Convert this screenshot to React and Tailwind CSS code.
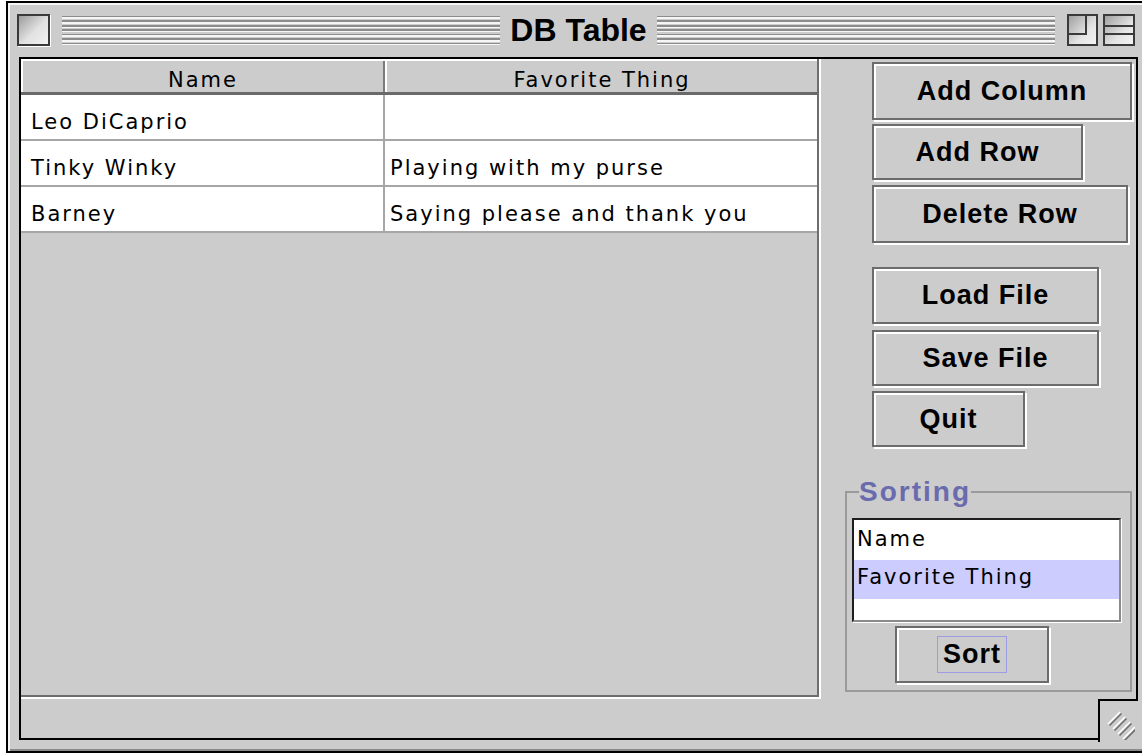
import React from 'react';

const rows = [
  { name: 'Leo DiCaprio', thing: '' },
  { name: 'Tinky Winky', thing: 'Playing with my purse' },
  { name: 'Barney', thing: 'Saying please and thank you' },
];

const plain = "font-['DejaVu_Sans',sans-serif] text-[21px] tracking-[2px] text-black whitespace-nowrap";
const bold = "font-['Liberation_Sans',sans-serif] font-bold text-[27px] tracking-[1px] text-black whitespace-nowrap";

// Title bar pinstripes
const Stripes = ({ className }) => (
  <div
    className={`h-[29px] bg-[repeating-linear-gradient(to_bottom,#8c8c8c_0px,#8c8c8c_1.5px,#f6f6f6_1.5px,#f6f6f6_3px,#cccccc_3px,#cccccc_4.5px)] ${className}`}
  />
);

const CloseBox = () => (
  <div className="w-[33px] h-[32px] border-2 border-[#3a3a3a] bg-[linear-gradient(135deg,#9c9c9c,#e2e2e2_55%,#f2f2f2)] shadow-[1px_1px_0_#ffffff]" />
);

const ZoomBox = ({ className }) => (
  <svg className={className} width="31" height="32" viewBox="0 0 31 32">
    <defs>
      <linearGradient id="zoomFill" x1="0" y1="0" x2="1" y2="1">
        <stop offset="0" stopColor="#9c9c9c" />
        <stop offset="0.6" stopColor="#e4e4e4" />
        <stop offset="1" stopColor="#f4f4f4" />
      </linearGradient>
    </defs>
    <rect x="1" y="1" width="29" height="30" fill="url(#zoomFill)" stroke="#3a3a3a" strokeWidth="2" />
    <path d="M2 20 H19 V2" fill="none" stroke="#3a3a3a" strokeWidth="2" />
  </svg>
);

const CollapseBox = ({ className }) => (
  <svg className={className} width="32" height="32" viewBox="0 0 32 32">
    <defs>
      <linearGradient id="collapseFill" x1="0" y1="0" x2="1" y2="1">
        <stop offset="0" stopColor="#9c9c9c" />
        <stop offset="0.6" stopColor="#e4e4e4" />
        <stop offset="1" stopColor="#f4f4f4" />
      </linearGradient>
    </defs>
    <rect x="1" y="1" width="30" height="30" fill="url(#collapseFill)" stroke="#3a3a3a" strokeWidth="2" />
    <path d="M2 12 H30 M2 20 H30" fill="none" stroke="#3a3a3a" strokeWidth="2" />
  </svg>
);

const MacButton = ({ className, children }) => (
  <div
    className={`flex items-center justify-center border-2 border-[#6c6c6c] bg-[#cccccc] shadow-[inset_2px_2px_0_#ffffff,2px_2px_0_#ffffff] ${bold} ${className}`}
  >
    {children}
  </div>
);

const Table = () => (
  <div className="w-[800px] h-[640px] border-r-2 border-b-2 border-white">
    <div className="h-full flex flex-col border-r-2 border-b-2 border-[#6e6e6e]">
      <div className="flex h-[36px] bg-[#cccccc] border-t-2 border-t-white border-b-[3px] border-b-[#6a6a6a]">
        <div className={`w-[364px] flex justify-center items-center pt-[9px] border-l-2 border-l-white border-r-2 border-r-[#7a7a7a] ${plain}`}>
          Name
        </div>
        <div className={`flex-1 flex justify-center items-center pt-[9px] border-l-2 border-l-white ${plain}`}>
          Favorite Thing
        </div>
      </div>
      {rows.map((row) => (
        <div key={row.name} className="flex h-[46px] bg-white border-b-2 border-[#a6a6a6]">
          <div className={`w-[364px] flex items-center pl-[10px] pt-[11px] border-r-2 border-[#a6a6a6] ${plain}`}>
            {row.name}
          </div>
          <div className={`flex-1 flex items-center pl-[5px] pt-[11px] ${plain}`}>{row.thing}</div>
        </div>
      ))}
      <div className="flex-1" />
    </div>
  </div>
);

const SidePanel = () => (
  <div className="flex-1 flex flex-col pt-[3px]">
    <div className="ml-[51px] flex flex-col">
      <MacButton className="w-[260px] h-[58px]">Add Column</MacButton>
      <MacButton className="mt-[4px] w-[211px] h-[56px]">Add Row</MacButton>
      <MacButton className="mt-[5px] w-[256px] h-[58px]">Delete Row</MacButton>
      <MacButton className="mt-[24px] w-[227px] h-[57px]">Load File</MacButton>
      <MacButton className="mt-[6px] w-[227px] h-[56px]">Save File</MacButton>
      <MacButton className="mt-[5px] w-[153px] h-[56px]">Quit</MacButton>
    </div>

    <fieldset className="ml-[24px] mt-[31px] w-[287px] border-2 border-[#9a9a9a] pl-[5px] pb-[7px]">
      <legend className="ml-[7px] font-['Liberation_Sans',sans-serif] font-bold text-[28px] leading-[28px] tracking-[2px] text-[#6a6aae]">
        Sorting
      </legend>
      <div className="mt-[12px] w-[269px] h-[104px] flex flex-col bg-white border-2 border-t-[#1e1e1e] border-l-[#1e1e1e] border-r-[#8a8a8a] border-b-[#8a8a8a] shadow-[1px_1px_0_#ffffff]">
        <div className={`h-[40px] flex items-center pl-[3px] ${plain}`}>Name</div>
        <div className={`h-[39px] flex items-center pl-[3px] pb-[4px] bg-[#ccccff] ${plain}`}>Favorite Thing</div>
      </div>
      <MacButton className="ml-[43px] mt-[4px] w-[154px] h-[57px]">
        <span className="border border-[#9c9ce2] px-[5px] leading-[35px]">Sort</span>
      </MacButton>
    </fieldset>
  </div>
);

const GrowBox = () => (
  <div className="absolute -right-[2px] -bottom-[4px] w-[40px] h-[43px] border-l-2 border-t-2 border-black bg-[#cccccc]">
    <svg className="mt-[7px] ml-[5px]" width="30" height="32" viewBox="0 0 30 32">
      {[0, 1, 2, 3].map((i) => (
        <g key={i}>
          <path d={`M${3 + 5 * i} ${16 + 5 * i} L${15 + 5 * i} ${4 + 5 * i}`} stroke="#ffffff" strokeWidth="1.6" />
          <path d={`M${4.5 + 5 * i} ${17.5 + 5 * i} L${16.5 + 5 * i} ${5.5 + 5 * i}`} stroke="#707070" strokeWidth="1.6" />
        </g>
      ))}
    </svg>
  </div>
);

export default function App() {
  return (
    <div className="w-[1142px] h-[753px] overflow-hidden bg-white pl-[6px] pt-[1px]">
      <div className="w-[1146px] h-[752px] flex flex-col border-2 border-black bg-[#cccccc] shadow-[inset_2px_2px_0_#f4f4f4,inset_-2px_-2px_0_#8a8a8a]">
        {/* title bar */}
        <div className="h-[54px] flex items-center pl-[9px]">
          <CloseBox />
          <Stripes className="ml-[12px] w-[438px]" />
          <div className="w-[157px] text-center font-['Liberation_Sans',sans-serif] font-bold text-[32px] leading-none text-black">
            DB Table
          </div>
          <Stripes className="w-[398px]" />
          <ZoomBox className="ml-[12px]" />
          <CollapseBox className="ml-[5px]" />
        </div>

        {/* window content */}
        <div className="relative ml-[11px] w-[1119px] h-[683px] flex flex-col border-2 border-black">
          <div className="flex h-[640px]">
            <Table />
            <SidePanel />
          </div>
          <div className="flex-1" />
          <GrowBox />
        </div>
      </div>
    </div>
  );
}
